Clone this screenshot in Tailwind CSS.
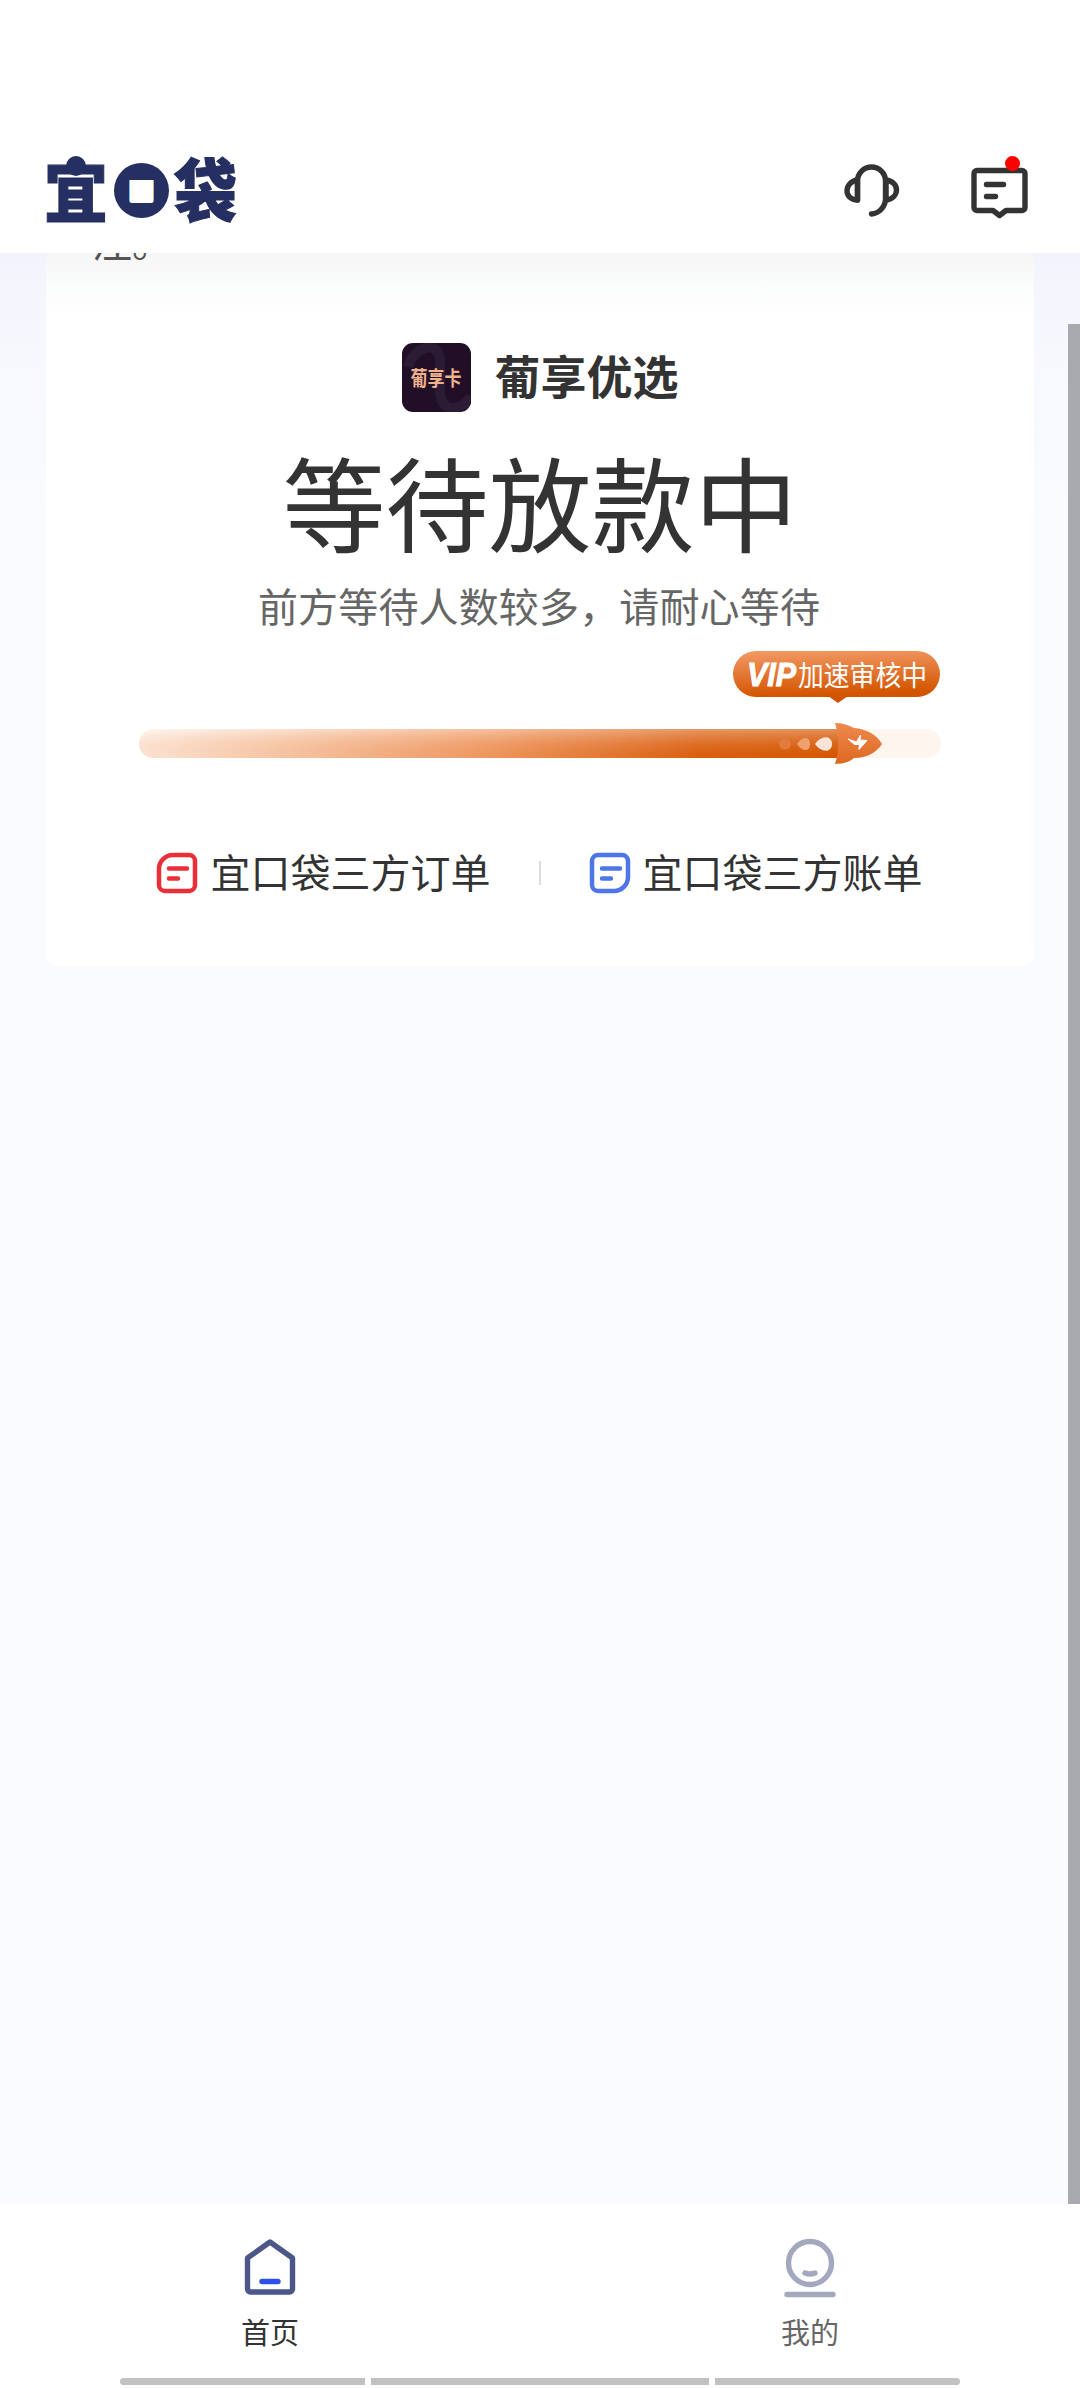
<!DOCTYPE html>
<html lang="zh-CN">
<head>
<meta charset="utf-8">
<title>宜口袋</title>
<script src="https://cdn.jsdelivr.net/npm/@tailwindcss/browser@4"></script>
</head>
<body class="w-[1080px] h-[2388px] overflow-hidden bg-[#fafbfe] font-['Noto_Sans_CJK_SC',sans-serif] text-[#333] flex flex-col">
  <header class="h-[253px] shrink-0 bg-white flex items-end justify-between pl-[46px] pr-[50px] pb-[28px] relative z-10">
    <div class="flex items-end h-[70px] text-[#262f62] font-black leading-none">
      <span class="w-[61px] h-[69px] relative">
        <span class="block -ml-[2px] text-[64px] leading-[67px] origin-bottom scale-y-[1.06] [-webkit-text-stroke:1px_#262f62]">宜</span>
        <span class="absolute left-[20px] top-0 size-[20px] rounded-full bg-[#262f62]"></span>
      </span>
      <span class="ml-[7px] mb-[7px] size-[55px] rounded-full bg-[#262f62] flex items-center justify-center relative">
        <span class="size-[25px] rounded-[3px] bg-white"></span>
        <span class="absolute inset-0 text-center text-[43px] font-medium leading-[52px]">口</span>
      </span>
      <span class="ml-[5px] w-[62px] h-[69px] text-[63px] leading-[67px] origin-bottom scale-y-[1.08] [-webkit-text-stroke:1px_#262f62]">袋</span>
    </div>
    <div class="flex items-end gap-[68px] mb-[5px]">
      <svg class="w-[58px] h-[60px]" viewBox="845 160 58 60" fill="none" stroke="#333" stroke-width="5.4" stroke-linecap="round" stroke-linejoin="round">
        <path d="M858.5 200v-19a14 14 0 0 1 28 0v17.500a15.500 15.500 0 0 1-14 15.500"/>
        <path d="M858.500 180c-14 2-14 20 0 20zM887 180c14 2 14 18 0 20z"/>
      </svg>
      <svg class="w-[60px] h-[66px]" viewBox="970 154 60 66" fill="none" stroke="#333" stroke-width="5.400" stroke-linecap="round" stroke-linejoin="round">
        <path d="M977 170.500h45a3 3 0 0 1 3 3v34a3 3 0 0 1-3 3h-16l-6.500 5-6.500-5h-16a3 3 0 0 1-3-3v-34a3 3 0 0 1 3-3zM986.500 184.500h17M986.500 196.500h9"/>
        <circle cx="1012.500" cy="163.500" r="7.500" fill="red" stroke="none"/>
      </svg>
    </div>
  </header>

  <main class="h-[1951px] shrink-0 relative bg-gradient-to-b from-[#f3f3fd] from-0% via-[#f8f9fe] via-[6%] to-[#fafbfe] to-[16%] px-[46px]">
    <section class="h-[713px] bg-white rounded-b-[10px] flex flex-col items-center relative">
      <div class="absolute inset-x-0 top-0 h-[68px] overflow-hidden bg-gradient-to-b from-[#f6f6f6] via-[#fbfcfc] to-white">
        <p class="ml-[46px] -mt-[39px] text-[40px] leading-[52px] text-[#555]">注。</p>
      </div>
      <div class="mt-[90px] flex items-center gap-[24px] h-[69px]">
        <div class="size-[69px] rounded-[11px] bg-[#210f28] relative overflow-hidden flex items-center justify-center">
          <svg class="absolute inset-0" viewBox="0 0 69 69" fill="none" stroke="#2c1b35" stroke-width="10"><path d="M6 24C12 2 38-3 38 18v30c0 24 24 20 31 5"/></svg>
          <span class="relative text-[17px] leading-none text-[#eeb18c] font-bold scale-y-[1.2] whitespace-nowrap">葡享卡</span>
        </div>
        <h2 class="text-[46px] leading-[69px] -mt-[6px] font-bold">葡享优选</h2>
      </div>
      <h1 class="mt-[29px] text-[103px] leading-[120px] whitespace-nowrap">等待放款中</h1>
      <p class="mt-[14px] -ml-[2px] text-[40px] leading-[60px] tracking-[0.15px] text-[#666] whitespace-nowrap">前方等待人数较多，请耐心等待</p>
      <svg class="mt-[5px] w-[820px] h-[130px] shrink-0" viewBox="130 640 820 130">
        <defs>
          <linearGradient id="pill" x1="0" y1="0" x2=".15" y2="1"><stop stop-color="#f39b67"/><stop offset="1" stop-color="#d35400"/></linearGradient>
          <linearGradient id="fade" x1="0" x2="1" y1="0" y2="0"><stop stop-color="#fff3ea"/><stop offset=".5" stop-color="#f09c66"/><stop offset=".8" stop-color="#d95e0e"/><stop offset="1" stop-color="#d35400"/></linearGradient>
          <linearGradient id="shine" x1="0" y1="0" x2="0" y2="1"><stop stop-color="#fff" stop-opacity=".36"/><stop offset=".9" stop-color="#e06a20" stop-opacity=".12"/></linearGradient>
          <linearGradient id="rocket" x1="0" y1="0" x2="0" y2="1"><stop stop-color="#ee8a4e"/><stop offset="1" stop-color="#dd6820"/></linearGradient>
        </defs>
        <rect x="733" y="651" width="207" height="46" rx="23" fill="url(#pill)"/>
        <path d="M828 696h20l-10 7z" fill="#d35400"/>
        <text x="747" y="686" font-family="Liberation Sans" font-size="34" font-weight="700" font-style="italic" textLength="49" lengthAdjust="spacingAndGlyphs" fill="#fff" stroke="#fff">VIP</text>
        <text x="798" y="686" font-size="28" textLength="129" lengthAdjust="spacingAndGlyphs" fill="#fff">加速审核中</text>
        <rect x="139" y="729" width="802" height="29" rx="14.500" fill="#fef6ee"/>
        <path d="M153.500 729H840v29H153.500a14.500 14.500 0 0 1 0-29z" fill="url(#fade)"/>
        <path d="M153.500 729H840v29H153.500a14.500 14.500 0 0 1 0-29z" fill="url(#shine)"/>
        <path d="M835 723c7 0 14 2 19 5 13 1 23 7 28 16-5 8-15 14-28 14-5 4-11 6-19 6 2-7 3-12 3-20 0-8-1-14-3-21z" fill="url(#rocket)"/>
        <path d="M848 739l8.500 3 4-7-.5 5 7 .5-8 9 .5-5-5 0zM860 743l6-2-7 8z" fill="#fff" stroke="#fff" stroke-width="1"/>
        <ellipse cx="785" cy="744" rx="6" ry="5.500" fill="#e37b3c"/>
        <path d="M797 744c5-8 13-8 13 0s-8 8-13 0z" fill="#efa06f"/>
        <path d="M815 744c6-9 17-9 17 0s-11 9-17 0z" fill="#fae4d7"/>
      </svg>
      <div class="mt-[75px] -ml-[2px] flex items-center text-[40px] leading-[60px] whitespace-nowrap">
        <svg class="w-[42px] h-[42px] mr-[13px]" viewBox="0 0 42 42" fill="none" stroke="#eb2f38" stroke-width="4.500" stroke-linecap="round"><path d="M17 3h16a6 6 0 0 1 6 6v24a6 6 0 0 1-6 6H9a6 6 0 0 1-6-6V17A14 14 0 0 1 17 3zM13 16.500h18M13 26.500h9"/></svg>
        <span class="-mt-[4px]">宜口袋三方订单</span>
        <span class="w-[2px] h-[24px] bg-[#ddd] mx-[48px]"></span>
        <svg class="w-[42px] h-[42px] mr-[12px]" viewBox="0 0 42 42" fill="none" stroke="#4d76e8" stroke-width="4.500" stroke-linecap="round"><path d="M9 3h24a6 6 0 0 1 6 6v16a14 14 0 0 1-14 14H9a6 6 0 0 1-6-6V9a6 6 0 0 1 6-6zM13 16.500h18M13 26.500h9"/></svg>
        <span class="-mt-[4px]">宜口袋三方账单</span>
      </div>
    </section>
    <div class="absolute right-0 top-[71px] bottom-0 w-[12px] bg-[#a9aaad]"></div>
  </main>

  <nav class="h-[184px] bg-white relative grid grid-cols-2 text-[29px] leading-[40px]">
    <div class="flex flex-col items-center pt-[31px]">
      <svg class="w-[60px] h-[66px]" viewBox="240 2235 60 66" fill="none" stroke="#4b5788" stroke-width="5.400" stroke-linejoin="round" stroke-linecap="round"><path d="M270 2242l22.500 16v31a3 3 0 0 1-3 3h-39a3 3 0 0 1-3-3v-31z"/><path d="M262 2281.500h16" stroke="#2c50e8"/></svg>
      <span class="mt-[10px]">首页</span>
    </div>
    <div class="flex flex-col items-center pt-[31px] text-[#666]">
      <svg class="w-[60px] h-[66px]" viewBox="780 2235 60 66" fill="none" stroke="#a3a8bf" stroke-width="5.400" stroke-linecap="round"><circle cx="810" cy="2263" r="21.500"/><path d="M805 2273q5 2 10 0M787 2294.500h46"/></svg>
      <span class="mt-[10px]">我的</span>
    </div>
    <div class="absolute left-[120px] bottom-[3px] flex gap-[6px] *:h-[7px] *:bg-[#c2c2c2]"><i class="w-[245px] rounded-l-full"></i><i class="w-[338px]"></i><i class="w-[245px] rounded-r-full"></i></div>
  </nav>
</body>
</html>
